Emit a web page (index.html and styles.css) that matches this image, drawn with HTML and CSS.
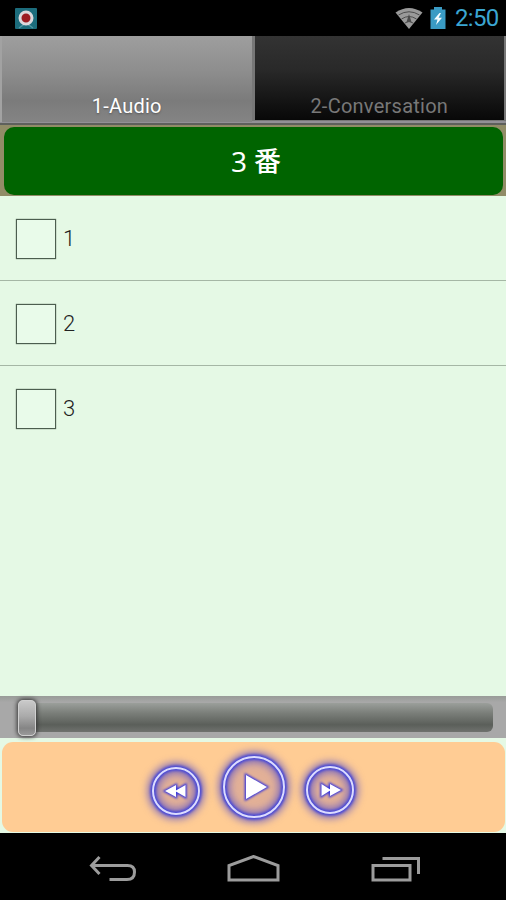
FILE: index.html
```
<!DOCTYPE html>
<html lang="ja">
<head>
  <meta charset="UTF-8" />
  <meta name="viewport" content="width=device-width, initial-scale=1.0"/>
  <title>3番</title>
  <link rel="stylesheet" href="styles.css">
</head>
<body>
  <div class="status-bar">
    <svg class="app-icon" width="22" height="21" viewBox="0 0 22 21">
      <rect width="22" height="21" rx="1" fill="#1c6c7c"/>
      <path d="M4 20 L11 15 L18 20" fill="none" stroke="#4f98a4" stroke-width="1.5"/>
      <circle cx="11" cy="10" r="6" fill="#9c1c22" stroke="#dcd8dc" stroke-width="3"/>
    </svg>
    <div class="status-right">
      <svg width="28" height="21" viewBox="0 0 28 21">
        <path d="M0.5 4.5 Q14 -4.5 27.5 4.5 L14 21 Z" fill="#9a9a9a"/>
        <path d="M3.5 7 Q14 0.5 24.5 7 M6.5 11 Q14 6 21.5 11 M9.8 15 Q14 12 18.2 15" fill="none" stroke="#444" stroke-width="0.9"/>
        <path d="M14 6 L11.500 14 H16.500 Z" fill="#4c4c4c"/>
      </svg>
      <svg width="16" height="22" viewBox="0 0 16 22">
        <path d="M4 0 H12 V2.5 H15.5 V22 H0.5 V2.5 H4 Z" fill="#3a9bc4"/>
        <path d="M9.5 6 L4 12.5 H7.5 L6 18 L12 10.8 H8.6 L11 6 Z" fill="#f4fcff"/>
      </svg>
      <span class="clock">2:50</span>
    </div>
  </div>

  <div class="tabs">
    <div class="tab active">1-Audio</div>
    <div class="tab">2-Conversation</div>
  </div>

  <div class="title-wrap">
    <div class="title">3<span class="kanji">番</span></div>
  </div>

  <div class="answers">
    <label class="answer"><span class="box"></span>1</label>
    <label class="answer"><span class="box"></span>2</label>
    <label class="answer"><span class="box"></span>3</label>
  </div>

  <div class="seek">
    <div class="thumb"></div>
    <div class="track"></div>
  </div>

  <div class="player">
    <div class="controls">
      <svg class="btn prev" width="66" height="66" viewBox="-33 -33 66 66">
        <circle class="halo" r="23"/>
        <circle class="ring" r="23"/>
        <circle class="line" r="23"/>
        <path class="glow" d="M-11 0 L0 -6 V6 Z M-1 0 L9.500 -6 V6 Z"/>
        <path class="sign" d="M-11 0 L0 -6 V6 Z M-1 0 L9.500 -6 V6 Z"/>
      </svg>
      <svg class="btn play" width="86" height="86" viewBox="-43 -43 86 86">
        <circle class="halo" r="30"/>
        <circle class="ring" r="30"/>
        <circle class="line" r="30"/>
        <path class="glow" d="M-8 -12 L13 0 L-8 12 Z"/>
        <path class="sign" d="M-8 -12 L13 0 L-8 12 Z"/>
      </svg>
      <svg class="btn next" width="66" height="66" viewBox="-33 -33 66 66">
        <circle class="halo" r="23"/>
        <circle class="ring" r="23"/>
        <circle class="line" r="23"/>
        <path class="glow" d="M11 0 L0 -6 V6 Z M1 0 L-8.500 -6 V6 Z"/>
        <path class="sign" d="M11 0 L0 -6 V6 Z M1 0 L-8.500 -6 V6 Z"/>
      </svg>
    </div>
  </div>

  <div class="nav-bar">
    <svg width="48" height="28" viewBox="0 0 48 28">
      <path d="M10.500 2 L2.500 10.500 L10.500 19 M2.500 10.500 H38.500 Q45.500 10.500 45.500 17 Q45.500 24.500 38 24.500 H20.500"/>
    </svg>
    <svg width="54" height="28" viewBox="0 0 54 28">
      <path d="M2 25 V10.500 L26.500 1.500 L51 10.500 V25 Z"/>
    </svg>
    <svg width="50" height="28" viewBox="0 0 50 28">
      <path d="M2 10.500 H39 V25 H2 Z M11.500 3.500 H47.500 V19"/>
    </svg>
  </div>
</body>
</html>
```
FILE: styles.css
```
body {
  margin: 0;
  height: 900px;
  display: flex;
  flex-direction: column;
  overflow: hidden;
  font-family: Roboto, "Noto Sans CJK JP", sans-serif;
  background-color: #e5f9e5;
}

svg {
  display: block;
}

.status-bar {
  height: 36px;
  box-sizing: border-box;
  padding: 0 7px 0 15px;
  display: flex;
  justify-content: space-between;
  align-items: center;
  background: #000;
}

.status-right {
  display: flex;
  align-items: center;
  gap: 7px;
}

.clock {
  width: 44px;
  margin-left: 2px;
  color: #3ba6d2;
  font-size: 24px;
  letter-spacing: -0.7px;
  line-height: 38px;
}

.tabs {
  height: 89px;
  box-sizing: border-box;
  display: flex;
  gap: 3px;
  padding-right: 2px;
  background: linear-gradient(#777 0, #777 85px, #929096 85px, #929096 87px, #5e605c 87px);
}

.tab {
  flex: 1;
  height: 84px;
  box-sizing: border-box;
  padding-top: 57px;
  text-align: center;
  font-size: 20px;
  line-height: 26px;
  letter-spacing: 0.25px;
  color: #787878;
  background: linear-gradient(#333, #292929 40%, #101010 85%, #080808);
}

.tab.active {
  height: 86px;
  color: #fff;
  border-left: 2px solid #a2a2a2;
  background: linear-gradient(#9e9e9e, #8e8e8e 40%, #7b7b7b 75%, #848484);
  text-shadow: 0 1px 2px #555;
}

.title-wrap {
  height: 71px;
  box-sizing: border-box;
  padding: 2px 3px 1px 4px;
  background: #918c67;
}

.title {
  height: 68px;
  box-sizing: border-box;
  padding: 0 0 1px 5px;
  display: flex;
  justify-content: center;
  align-items: center;
  gap: 7px;
  border-radius: 10px;
  background: #006400;
  color: #fff;
  font-family: "Noto Sans", "Noto Sans CJK JP", sans-serif;
  font-size: 28px;
}

.kanji {
  font-family: "Noto Sans CJK JP", sans-serif;
  font-size: 27px;
  font-weight: 500;
  line-height: 36px;
  margin-top: -2px;
}

.answers {
  flex: 1;
}

.answer {
  height: 84px;
  padding-left: 16px;
  display: flex;
  align-items: center;
  gap: 7px;
  border-bottom: 1px solid #a5b7a5;
  color: #222;
  font-size: 22px;
  font-weight: 300;
}

.answer:last-child {
  border-bottom: none;
}

.box {
  width: 38px;
  height: 38px;
  margin-top: 2px;
  border: 1px solid #4c5e4f;
  background: #e9fbea;
  box-shadow: 0 0 1px #4c5e4f;
}

.seek {
  height: 42px;
  display: flex;
  align-items: center;
  background: linear-gradient(#999c98, #a8a8a8 15%, #a8a8a8);
}

.thumb {
  width: 18px;
  height: 36px;
  margin-left: 18px;
  margin-top: 2px;
  z-index: 1;
  box-sizing: border-box;
  border: 1px solid #d0d0d0;
  border-radius: 5px;
  background: linear-gradient(#c9c9c9, #aaa 45%, #858585 80%, #999);
  box-shadow: 0 0 4px 1px #333;
}

.track {
  flex: 1;
  height: 29px;
  margin: 0 13px 0 -4px;
  border-radius: 0 6px 6px 0;
  background: linear-gradient(#9b9f9b, #7a7e79 35%, #5b5f5a 75%, #6f726e);
}

.player {
  height: 95px;
  box-sizing: border-box;
  padding: 4px 1px 2px 2px;
}

.controls {
  height: 90px;
  box-sizing: border-box;
  padding-right: 2px;
  display: flex;
  justify-content: center;
  align-items: center;
  border-radius: 11px;
  background: #ffcc94;
}

.btn {
  overflow: visible;
}

.prev {
  margin-top: 7px;
  margin-right: 2px;
}

.next {
  margin-top: 5px;
}

.halo {
  fill: #a06fa0;
  fill-opacity: 0.3;
  stroke: #6a5cc4;
  stroke-width: 9;
  filter: blur(4px);
}

.ring {
  fill: none;
  stroke: #4a4ad4;
  stroke-width: 5.5;
  filter: blur(0.8px);
}

.line {
  fill: none;
  stroke: #dcdcff;
  stroke-width: 2;
}

.glow {
  fill: #3333e0;
  stroke: #3333e0;
  stroke-width: 2.5;
  filter: blur(1px);
}

.sign {
  fill: #fff;
}

.nav-bar {
  height: 67px;
  box-sizing: border-box;
  padding: 4px 0 0 3px;
  display: flex;
  justify-content: center;
  align-items: center;
  gap: 90px;
  background: #000;
}

.nav-bar path {
  fill: none;
  stroke: #9c9c9c;
  stroke-width: 3;
}
```
